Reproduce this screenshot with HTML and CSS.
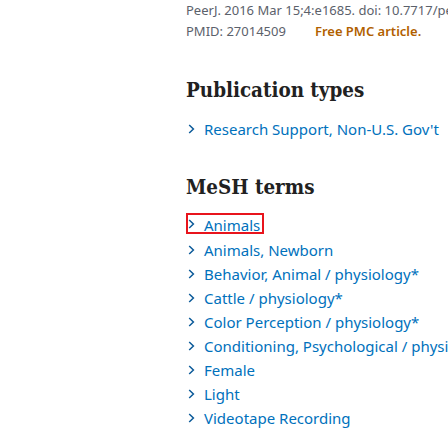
FILE: index.html
```html
<!DOCTYPE html>
<html>
<head>
<meta charset="utf-8">
<link rel="stylesheet" href="styles.css">
</head>
<body>
<main class="page">
  <div class="citation">
    <div class="cit-line">PeerJ. 2016 Mar 15;4:e1685. doi: 10.7717/peerj.1685. eCollection 2016.</div>
    <div class="cit-line"><span class="pmid">PMID: 27014509</span><span class="free">Free PMC article.</span></div>
  </div>

  <section class="block">
    <h2 class="heading">Publication types</h2>
    <ul class="terms">
      <li><a class="term"><svg class="chev" viewBox="0 0 7 10"><path d="M1.2 1 L5.4 5 L1.2 9" /></svg>Research Support, Non-U.S. Gov't</a></li>
    </ul>
  </section>

  <section class="block">
    <h2 class="heading">MeSH terms</h2>
    <ul class="terms">
      <li><a class="term focused"><svg class="chev" viewBox="0 0 7 10"><path d="M1.2 1 L5.4 5 L1.2 9" /></svg>Animals</a></li>
      <li><a class="term"><svg class="chev" viewBox="0 0 7 10"><path d="M1.2 1 L5.4 5 L1.2 9" /></svg>Animals, Newborn</a></li>
      <li><a class="term"><svg class="chev" viewBox="0 0 7 10"><path d="M1.2 1 L5.4 5 L1.2 9" /></svg>Behavior, Animal / physiology*</a></li>
      <li><a class="term"><svg class="chev" viewBox="0 0 7 10"><path d="M1.2 1 L5.4 5 L1.2 9" /></svg>Cattle / physiology*</a></li>
      <li><a class="term"><svg class="chev" viewBox="0 0 7 10"><path d="M1.2 1 L5.4 5 L1.2 9" /></svg>Color Perception / physiology*</a></li>
      <li><a class="term"><svg class="chev" viewBox="0 0 7 10"><path d="M1.2 1 L5.4 5 L1.2 9" /></svg>Conditioning, Psychological / physiology*</a></li>
      <li><a class="term"><svg class="chev" viewBox="0 0 7 10"><path d="M1.2 1 L5.4 5 L1.2 9" /></svg>Female</a></li>
      <li><a class="term"><svg class="chev" viewBox="0 0 7 10"><path d="M1.2 1 L5.4 5 L1.2 9" /></svg>Light</a></li>
      <li><a class="term"><svg class="chev" viewBox="0 0 7 10"><path d="M1.2 1 L5.4 5 L1.2 9" /></svg>Videotape Recording</a></li>
    </ul>
  </section>
</main>
</body>
</html>
```

FILE: styles.css
```css
html, body {
  margin: 0;
  padding: 0;
  background: #ffffff;
  overflow: hidden;
}
.page {
  padding-left: 186px;
  width: 600px;
  font-family: "Noto Sans", "Open Sans", sans-serif;
  white-space: nowrap;
}
.citation {
  font-size: 13px;
  color: #5b616b;
  line-height: 21px;
}
.pmid {
  margin-right: 29px;
}
.free {
  color: #b15f00;
  font-weight: 600;
}
.block {
  margin-top: 34px;
}
.block + .block {
  margin-top: 32.5px;
}
.heading {
  margin: 0 0 12.5px 0;
  font-family: "DejaVu Serif Condensed", "DejaVu Serif", serif;
  font-stretch: condensed;
  font-weight: bold;
  font-size: 20.4px;
  line-height: 28px;
  color: #212121;
}
.terms {
  list-style: none;
  margin: 0;
  padding: 0;
}
.terms li {
  height: 24px;
  display: flex;
  align-items: flex-start;
}
.term {
  display: inline-flex;
  align-items: center;
  height: 24px;
  font-size: 15px;
  color: #0071bc;
  line-height: 24px;
  padding-left: 2px;
}
.chev {
  width: 7px;
  height: 10px;
  flex: none;
  margin-right: 9px;
}
.chev path {
  fill: none;
  stroke: #0b5a99;
  stroke-width: 1.5;
}
.term.focused {
  height: 17px;
  line-height: 21.8px;
  align-items: flex-start;
  margin: 1.5px 0 0 2px;
  padding: 0 2px 0 0;
  outline: 2px solid #e8141c;
}
.term.focused .chev {
  margin-top: 3.5px;
}
```
